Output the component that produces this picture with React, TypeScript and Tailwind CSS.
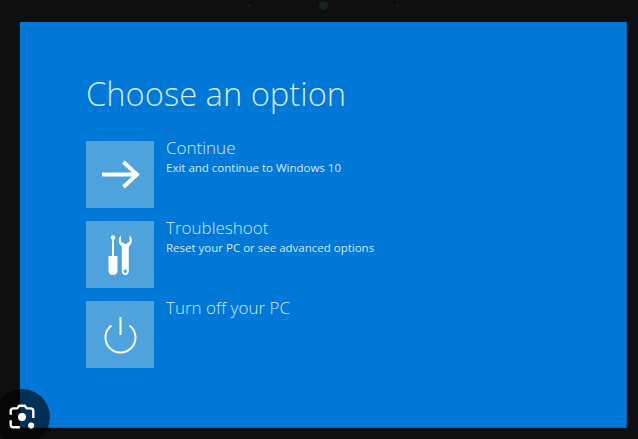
export default function App() {
  const options = [
    {
      title: "Continue",
      sub: "Exit and continue to Windows 10",
      icon: (
        <svg width="68" height="67" viewBox="0 0 68 67" fill="none" stroke="#fff" strokeWidth="3.8">
          <path d="M16 33.500H51" />
          <path d="M37.500 21L51 33.500L37.500 46" />
        </svg>
      ),
    },
    {
      title: "Troubleshoot",
      sub: "Reset your PC or see advanced options",
      icon: (
        <svg width="68" height="67" viewBox="0 0 68 67" fill="#fff">
          <circle cx="27" cy="16.500" r="2.200" />
          <rect x="26" y="17" width="2" height="18" />
          <path d="M23.500 35h7c.6 0 1 .4 1 1v13.500c0 3-1.800 4.500-4.500 4.500s-4.500-1.500-4.500-4.500V36c0-.6.4-1 1-1z" />
          <path
            fillRule="evenodd"
            d="M35 14.500c-1.500 1.300-2.200 3-2.200 5 0 2.800 1 4.700 3 5.900V50c0 2.700 1.500 4 3.500 4s3.500-1.300 3.500-4V25.400c2-1.200 3-3.100 3-5.900 0-2-.7-3.700-2.200-5v6.100l-4.300 2.600-4.300-2.600zM39.300 48.500a1.800 1.800 0 1 0 0 3.600 1.800 1.800 0 0 0 0-3.600z"
          />
        </svg>
      ),
    },
    {
      title: "Turn off your PC",
      sub: "",
      icon: (
        <svg width="68" height="67" viewBox="0 0 68 67" fill="none" stroke="#fff" strokeWidth="2">
          <path d="M25.500 24.500a15 15 0 1 0 18 0" />
          <path d="M34.500 16V34" />
        </svg>
      ),
    },
  ];

  return (
    <div className="relative h-[439px] w-[638px] overflow-hidden bg-[#0f0f0f] font-['Open_Sans',sans-serif]">
      {/* camera dots on the bezel */}
      <div className="flex h-[22px] items-start justify-center gap-[68px] pl-[8px] pt-[1px]">
        <div className="mt-[3px] h-[3px] w-[3px] rounded-full bg-[#1c1c1c]" />
        <div className="h-[9px] w-[9px] rounded-full bg-[#182126]" />
        <div className="mt-[3px] h-[3px] w-[3px] rounded-full bg-[#1a1a1a]" />
      </div>

      <main className="ml-[20px] flex h-[406px] w-[607px] flex-col border-r border-b border-[#0a62ad] bg-[#0078d7] pl-[66px] pt-[47px]">
        <h1 className="h-[52px] text-[32.700px] leading-[50px] font-light text-[#d3e8f8]">
          Choose an option
        </h1>
        <div className="mt-[20px] flex flex-col gap-[13px]">
          {options.map((o) => (
            <div key={o.title} className="flex gap-[12px]">
              <div className="h-[67px] w-[68px] bg-[#4fa3dc]">{o.icon}</div>
              <div className="-mt-[1px] text-[#d0e6f7]">
                <div className="text-[17px] leading-[16px] font-light">{o.title}</div>
                <div className="mt-[4px] text-[11.500px] leading-[16px] text-[#d6e9f8]">{o.sub}</div>
              </div>
            </div>
          ))}
        </div>
      </main>

      {/* lens button */}
      <div className="absolute left-[-6px] top-[389px] flex h-[56px] w-[56px] items-center justify-center rounded-full bg-[#00000099]">
        <svg width="28" height="28" viewBox="0 0 26 26" fill="none" stroke="#fff" strokeWidth="2.200">
          <path d="M2.500 11V7.500C2.500 6 3.500 5 5 5H8.500L10.500 2.500H15.500L17.500 5H21C22.500 5 23.500 6 23.500 7.500V14" />
          <path d="M2.500 16V20C2.500 21.500 3.500 22.500 5 22.500H11" />
          <circle cx="13" cy="13" r="3.700" fill="#fff" stroke="none" />
          <circle cx="21.500" cy="21" r="2.800" fill="#fff" stroke="none" />
        </svg>
      </div>
    </div>
  );
}
